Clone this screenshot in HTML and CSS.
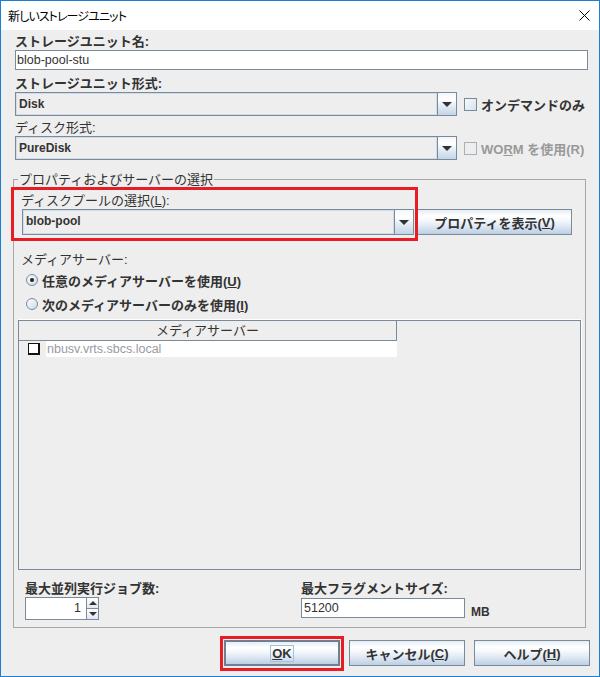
FILE: index.html
```html
<!DOCTYPE html>
<html lang="ja">
<head>
<meta charset="utf-8">
<title>新しいストレージユニット</title>
<link rel="stylesheet" href="styles.css">
</head>
<body>
<div class="window">
  <div class="titlebar">
    <span class="title">新しいストレージユニット</span>
    <svg class="close" width="11" height="11" viewBox="0 0 11 11"><path d="M0.5 0.5 L10.5 10.5 M10.5 0.5 L0.5 10.5" stroke="#000" stroke-width="1" fill="none"/></svg>
  </div>
  <div class="content">
    <div class="label bold l1">ストレージユニット名:</div>
    <div class="textfield">blob-pool-stu</div>

    <div class="label bold l2">ストレージユニット形式:</div>
    <div class="combo-row">
      <div class="combo">
        <div class="combo-field">Disk</div>
        <div class="combo-arrow"><span class="tri"></span></div>
      </div>
      <span class="check"></span>
      <span class="check-label">オンデマンドのみ</span>
    </div>

    <div class="label l3">ディスク形式:</div>
    <div class="combo-row">
      <div class="combo">
        <div class="combo-field">PureDisk</div>
        <div class="combo-arrow"><span class="tri"></span></div>
      </div>
      <span class="check disabled"></span>
      <span class="check-label disabled">WO<u>R</u>M を使用(R)</span>
    </div>

    <fieldset class="group">
      <legend>プロパティおよびサーバーの選択</legend>
      <div class="label pool-label">ディスクプールの選択(<u>L</u>):</div>
      <div class="pool-row">
        <div class="combo pool-combo">
          <div class="combo-field">blob-pool</div>
          <div class="combo-arrow"><span class="tri"></span></div>
        </div>
        <button class="btn props">プロパティを表示(<u>V</u>)</button>
      </div>

      <div class="label media-label">メディアサーバー:</div>
      <div class="radio-row"><span class="radio checked"></span><span class="radio-label">任意のメディアサーバーを使用(<u>U</u>)</span></div>
      <div class="radio-row"><span class="radio"></span><span class="radio-label">次のメディアサーバーのみを使用(<u>I</u>)</span></div>

      <div class="table">
        <div class="th">メディアサーバー</div>
        <div class="tr">
          <div class="cell-check"><span class="tcheck"></span></div>
          <div class="cell-name">nbusv.vrts.sbcs.local</div>
        </div>
      </div>

      <div class="params">
        <div class="param">
          <div class="label bold">最大並列実行ジョブ数:</div>
          <div class="spinner">
            <div class="spin-field">1</div>
            <div class="spin-btns">
              <div class="spin-btn"><span class="tri up"></span></div>
              <div class="spin-btn"><span class="tri small"></span></div>
            </div>
          </div>
        </div>
        <div class="param">
          <div class="label bold">最大フラグメントサイズ:</div>
          <div class="frag-row">
            <div class="frag-field">51200</div>
            <span class="unit">MB</span>
          </div>
        </div>
      </div>
    </fieldset>

    <div class="buttons">
      <button class="btn default"><span class="focus"><u>O</u>K</span></button>
      <button class="btn">キャンセル(<u>C</u>)</button>
      <button class="btn">ヘルプ(<u>H</u>)</button>
    </div>
  </div>
</div>
<div class="mark mark-pool"></div>
<div class="mark mark-ok"></div>
</body>
</html>
```
FILE: styles.css
```css
* { box-sizing: border-box; }
html, body { margin: 0; padding: 0; }
body {
  width: 600px;
  height: 677px;
  overflow: hidden;
  position: relative;
  background: #fff;
  font-family: "Liberation Sans", "Noto Sans CJK JP", sans-serif;
  color: #333;
}
.window {
  width: 600px;
  height: 677px;
  border: 1px solid #1a7fd4;
  background: #eeeeee;
  display: flex;
  flex-direction: column;
}
.titlebar {
  height: 29px;
  flex: none;
  background: #fff;
  display: flex;
  align-items: center;
  justify-content: space-between;
  padding: 0 9px 0 7px;
}
.title {
  font-family: "Noto Sans CJK JP", sans-serif;
  font-size: 12px;
  font-feature-settings: "palt";
  letter-spacing: -0.9px;
  color: #000;
}
.close { display: block; }
.content {
  flex: 1;
  display: flex;
  flex-direction: column;
  padding: 4px 13px 0 12px;
}
.label {
  font-size: 13px;
  line-height: 16px;
  height: 16px;
  white-space: nowrap;
  color: #333;
}
.bold { font-weight: bold; }
.l1, .l2, .l3 { margin-left: 2px; }
.l2 { margin-top: 6px; }
.l3 { margin-top: 4px; }
.textfield {
  height: 20px;
  margin: 0 -2px 0 2px;
  border: 1px solid #7a8a99;
  background: #fff;
  font-size: 12.5px;
  line-height: 18px;
  padding-left: 1px;
  color: #333;
}
.combo-row {
  display: flex;
  align-items: center;
  margin: 0 -2px 0 2px;
}
.combo {
  width: 442px;
  height: 24px;
  display: flex;
}
.combo-field {
  flex: 1;
  border: 1px solid #7a8a99;
  border-right: none;
  background: #eeeeee;
  box-shadow: inset 1px 1px 0 #cfdcea, inset -1px -1px 0 #cfdcea;
  font-size: 12px;
  font-weight: bold;
  line-height: 22px;
  padding-left: 3px;
  color: #333;
}
.combo-arrow {
  width: 20px;
  border: 1px solid #7a8a99;
  background: linear-gradient(#f3f7fb, #ffffff 30%, #e6eef6 55%, #c3d5e8);
  display: flex;
  align-items: center;
  justify-content: center;
}
.tri {
  width: 0;
  height: 0;
  border-left: 5px solid transparent;
  border-right: 5px solid transparent;
  border-top: 5px solid #333;
}
.tri.up {
  border-top: none;
  border-bottom: 4px solid #333;
  border-left-width: 4px;
  border-right-width: 4px;
}
.tri.small {
  border-top-width: 4px;
  border-left-width: 4px;
  border-right-width: 4px;
}
.check {
  width: 13px;
  height: 13px;
  margin-left: 7px;
  border: 1px solid #7a8a99;
  background: linear-gradient(135deg, #f7fafc, #d6e2ee);
  flex: none;
}
.check.disabled {
  border-color: #a8b0b8;
  background: #eeeeee;
}
.check-label {
  margin-left: 4px;
  font-size: 13px;
  font-weight: bold;
  white-space: nowrap;
  color: #333;
}
.check-label.disabled { color: #999; }

.group {
  margin: 10px 0 0 0;
  min-width: 0;
  border: 1px solid #a6a6a6;
  padding: 5px 4px 7px 4px;
}
.group legend {
  font-size: 13px;
  line-height: 16px;
  padding: 2px 1px 0 1px;
  color: #333;
}
.pool-label { margin-left: 3px; }
.pool-row {
  display: flex;
  margin-left: 4px;
}
.pool-combo {
  width: 392px;
  height: 26px;
}
.btn {
  font-family: "Liberation Sans", "Noto Sans CJK JP", sans-serif;
  font-size: 13px;
  font-weight: bold;
  color: #333;
  border: 1px solid #7a8a99;
  background: linear-gradient(#e4edf5, #ffffff 25%, #f4f7fb 45%, #dce7f2 70%, #bccfe3);
  padding: 0;
  margin: 0;
  display: flex;
  align-items: center;
  justify-content: center;
}
.btn u { text-decoration: underline; }
.props {
  width: 155px;
  height: 26px;
  margin-left: 3px;
}
.media-label {
  margin-left: 3px;
  margin-top: 17px;
}
.radio-row {
  height: 24px;
  display: flex;
  align-items: center;
  margin-left: 8px;
}
.radio {
  width: 12px;
  height: 12px;
  border-radius: 50%;
  border: 1px solid #7a8a99;
  background: linear-gradient(135deg, #fbfcfe, #cddbea);
  display: flex;
  align-items: center;
  justify-content: center;
  flex: none;
}
.radio.checked::after {
  content: "";
  width: 4px;
  height: 4px;
  border-radius: 50%;
  background: #222;
}
.radio-label {
  margin-left: 4px;
  font-size: 13px;
  font-weight: bold;
  white-space: nowrap;
}
.table {
  margin-top: 4px;
  height: 250px;
  border: 1px solid #7a8a99;
  background: #eeeeee;
  box-shadow: 0 -1px 0 #fff, 1px 0 0 #fff;
}
.th {
  width: 378px;
  height: 20px;
  border-right: 1px solid #7a8a99;
  border-bottom: 1px solid #7a8a99;
  font-size: 13px;
  line-height: 19px;
  text-align: center;
  color: #333;
}
.tr {
  width: 378px;
  height: 16px;
  display: flex;
}
.cell-check {
  width: 27px;
  display: flex;
  align-items: center;
  padding-left: 9px;
}
.tcheck {
  width: 12px;
  height: 12px;
  border: 1px solid #111;
  border-right-width: 2px;
  border-bottom-width: 2px;
  background: #fff;
}
.cell-name {
  flex: 1;
  background: #fff;
  font-size: 12.5px;
  line-height: 16px;
  padding-left: 1px;
  color: #9a9aa4;
}
.params {
  margin-top: 11px;
  display: grid;
  grid-template-columns: 276px 1fr;
  padding-left: 7px;
}
.spinner {
  width: 74px;
  height: 23px;
  display: flex;
}
.spin-field {
  flex: 1;
  background: #fff;
  border: 1px solid #7a8a99;
  border-right: none;
  font-size: 12.5px;
  line-height: 21px;
  text-align: right;
  padding-right: 5px;
  color: #333;
}
.spin-btns {
  width: 13px;
  display: flex;
  flex-direction: column;
  border: 1px solid #7a8a99;
}
.spin-btn {
  flex: 1;
  display: flex;
  align-items: center;
  justify-content: center;
  background: linear-gradient(#ffffff, #dfe8f2);
}
.spin-btn + .spin-btn { border-top: 1px solid #7a8a99; }
.frag-row {
  display: flex;
  align-items: flex-end;
  margin-top: 1px;
}
.frag-field {
  width: 164px;
  height: 20px;
  background: #fff;
  border: 1px solid #7a8a99;
  font-size: 12.5px;
  line-height: 18px;
  padding-left: 2px;
  color: #333;
}
.unit {
  margin-left: 6px;
  font-size: 12px;
  font-weight: bold;
  line-height: 12px;
  color: #333;
}
.buttons {
  display: flex;
  justify-content: flex-end;
  gap: 9px;
  margin: 12px -4px 0 0;
}
.buttons .btn {
  width: 116px;
  height: 26px;
}
.buttons .btn.default {
  border: 2px solid #6f7f8e;
}
.focus {
  border: 1px solid #a9bfd6;
  padding: 0 1px;
  line-height: 15px;
}
.mark {
  position: absolute;
  border: 3px solid #e81c24;
  pointer-events: none;
}
.mark-pool {
  left: 11px;
  top: 187px;
  width: 407px;
  height: 54px;
}
.mark-ok {
  left: 220px;
  top: 636px;
  width: 124px;
  height: 35px;
}
```
